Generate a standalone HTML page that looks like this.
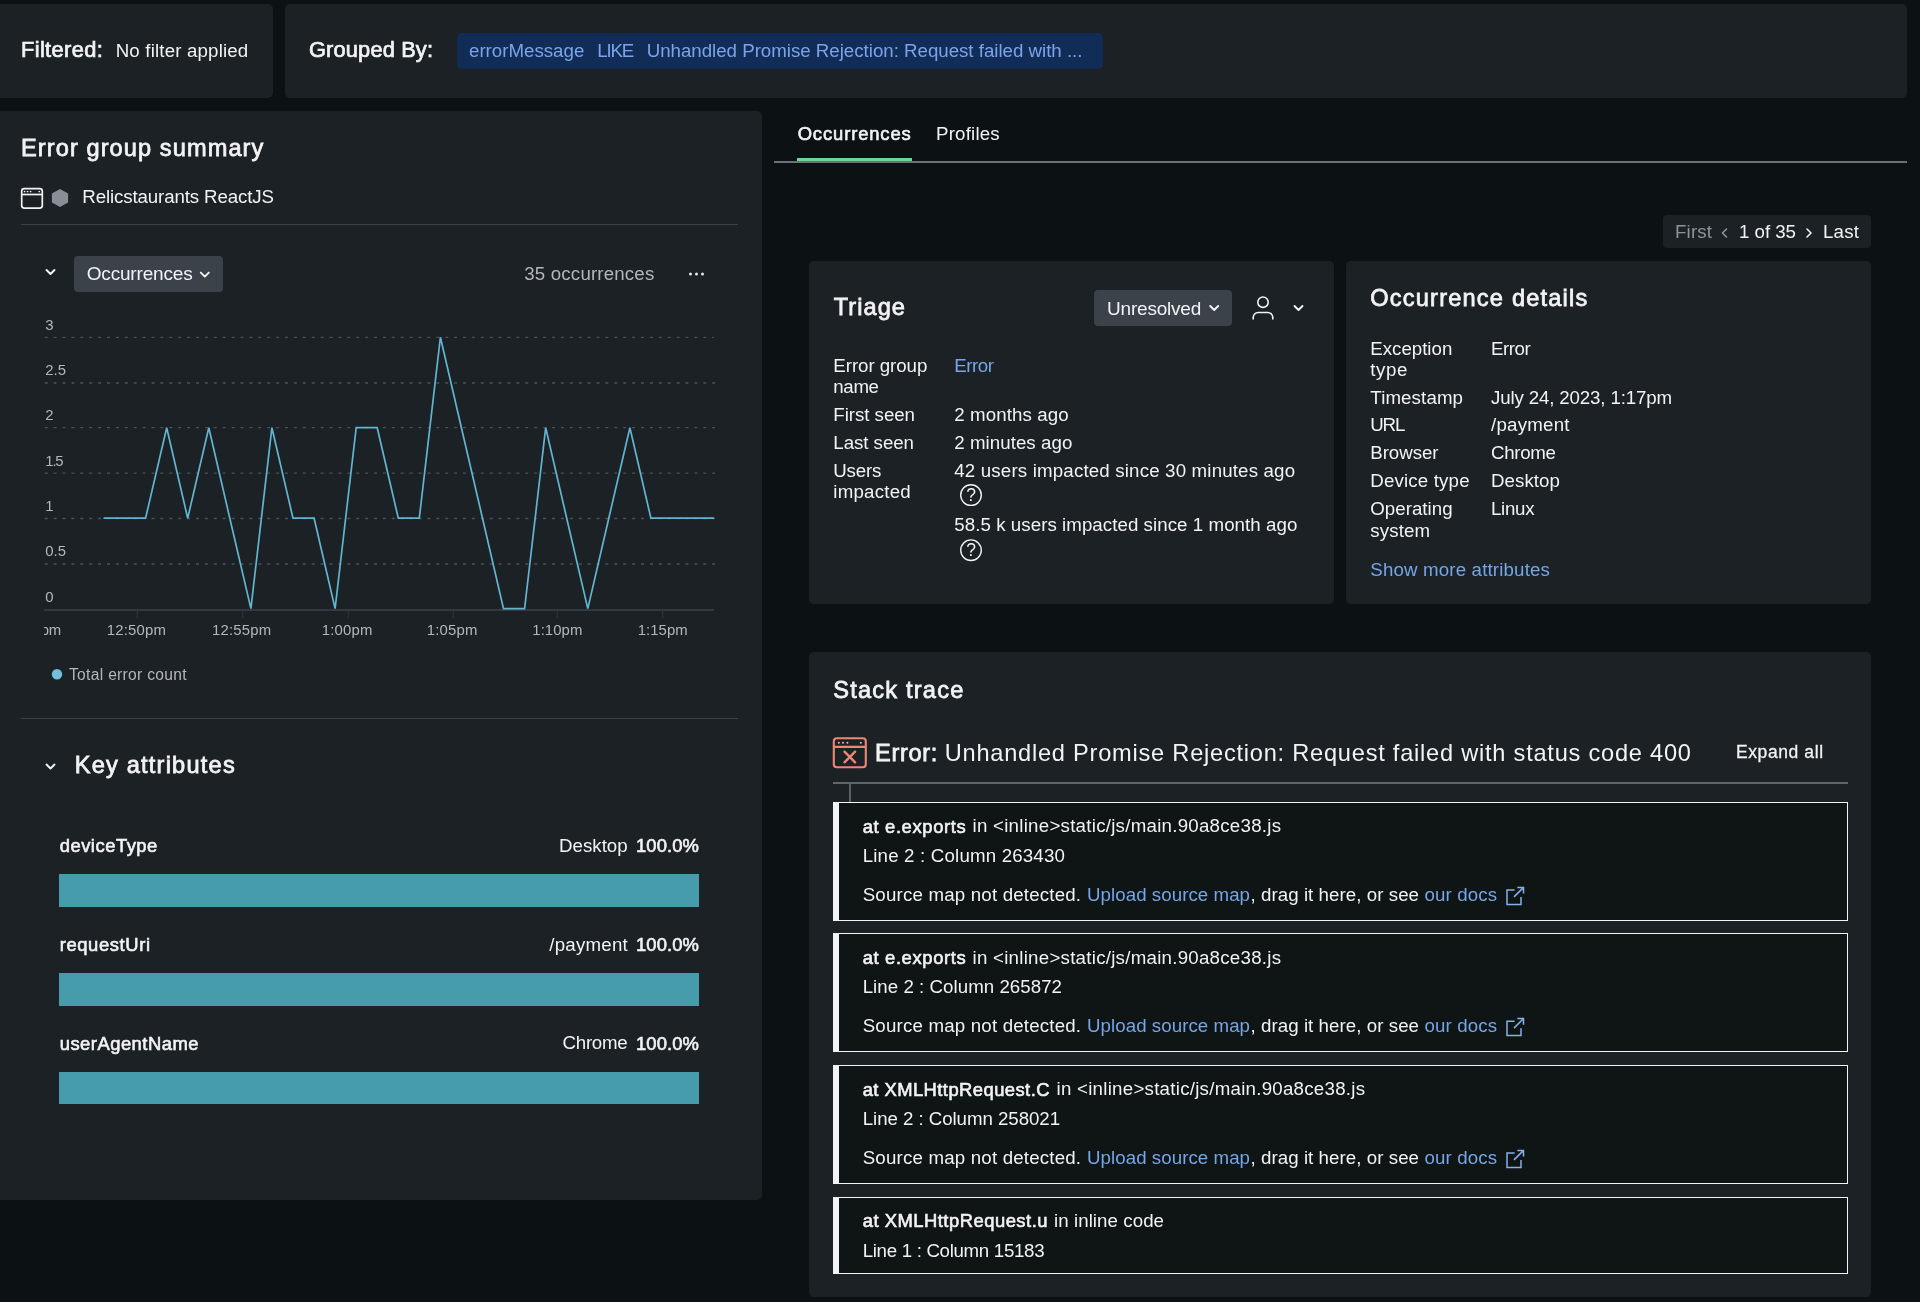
<!DOCTYPE html>
<html lang="en"><head><meta charset="utf-8"><title>Error group</title>
<style>
html,body{margin:0;padding:0}
body{width:1920px;height:1302px;background:#0c1213;overflow:hidden;position:relative;font-family:"Liberation Sans","DejaVu Sans",sans-serif;color:#f2f3f4}
.p{position:absolute;background:#1c2126}
.t{position:absolute;white-space:pre;line-height:1}
.b{position:absolute}
svg{position:absolute;overflow:visible}
.frame{position:absolute;left:833px;width:1014.5px;box-sizing:border-box;background:#0f1415;border:1.8px solid #f1f3f4;border-left:6.4px solid #f1f3f4}
.bar{position:absolute;left:59.3px;width:640px;height:32.5px;background:#479cab}
#texts{position:absolute;left:0;top:0;width:1920px;height:1302px;will-change:transform}

</style></head>
<body>
<!-- top bar -->
<div class="p" style="left:0;top:4px;width:273px;height:94.3px;border-radius:0 5px 5px 0"></div>
<div class="p" style="left:285px;top:4px;width:1621.5px;height:94.3px;border-radius:5px"></div>
<div class="b" style="left:456.7px;top:33.3px;width:646.6px;height:35.7px;border-radius:5px;background:#122c58"></div>
<!-- left panel -->
<div class="p" style="left:0;top:111px;width:761.5px;height:1088.5px;border-radius:0 5px 5px 0"></div>
<div class="b" style="left:21px;top:223.6px;width:717.3px;height:1.4px;background:#3b4046"></div>
<div class="b" style="left:21px;top:718px;width:717.3px;height:1.4px;background:#3b4046"></div>
<div class="b" style="left:74px;top:256px;width:148.7px;height:35.7px;border-radius:4px;background:#3c424a"></div>
<!-- right panels -->
<div class="b" style="left:774px;top:161.4px;width:1132.5px;height:1.3px;background:#6c7176"></div>
<div class="b" style="left:797.3px;top:157.8px;width:114.4px;height:3.6px;background:#6fd695"></div>
<div class="p" style="left:1663px;top:215px;width:208px;height:33px;border-radius:4px"></div>
<div class="p" style="left:809.3px;top:261px;width:525px;height:343px;border-radius:5px"></div>
<div class="p" style="left:1346px;top:261px;width:525px;height:343px;border-radius:5px"></div>
<div class="p" style="left:809.3px;top:652.3px;width:1061.7px;height:645.2px;border-radius:5px"></div>
<div class="b" style="left:1094.3px;top:290px;width:137.4px;height:35.7px;border-radius:4px;background:#3c424a"></div>
<div class="b" style="left:833px;top:782.2px;width:1014.5px;height:1.4px;background:#60656b"></div>
<div class="b" style="left:849.3px;top:783px;width:1.4px;height:20px;background:#5b6066"></div>
<div class="frame" style="top:802px;height:119.3px"></div>
<div class="frame" style="top:933.2px;height:119.3px"></div>
<div class="frame" style="top:1065px;height:119.3px"></div>
<div class="frame" style="top:1196.7px;height:77.6px"></div>
<div class="bar" style="top:874.3px"></div>
<div class="bar" style="top:973px"></div>
<div class="bar" style="top:1071.8px"></div>
<svg width="1920" height="1302" style="left:0;top:0" viewBox="0 0 1920 1302">
<line x1="44.7" y1="337.3" x2="714" y2="337.3" stroke="#4b5157" stroke-width="1.3" stroke-dasharray="3 5.9"/>
<line x1="44.7" y1="383" x2="715" y2="383" stroke="#4b5157" stroke-width="1.3" stroke-dasharray="3 5.9"/>
<line x1="44.7" y1="427.7" x2="715" y2="427.7" stroke="#4b5157" stroke-width="1.3" stroke-dasharray="3 5.9"/>
<line x1="44.7" y1="473.2" x2="715" y2="473.2" stroke="#4b5157" stroke-width="1.3" stroke-dasharray="3 5.9"/>
<line x1="44.7" y1="518.5" x2="715" y2="518.5" stroke="#4b5157" stroke-width="1.3" stroke-dasharray="3 5.9"/>
<line x1="44.7" y1="564" x2="715" y2="564" stroke="#4b5157" stroke-width="1.3" stroke-dasharray="3 5.9"/>
<line x1="44" y1="610" x2="714" y2="610" stroke="#4d5359" stroke-width="1.1"/>
<line x1="137.3" y1="610" x2="137.3" y2="618" stroke="#2e3439" stroke-width="1.2"/>
<line x1="242.7" y1="610" x2="242.7" y2="618" stroke="#2e3439" stroke-width="1.2"/>
<line x1="348.3" y1="610" x2="348.3" y2="618" stroke="#2e3439" stroke-width="1.2"/>
<line x1="453.3" y1="610" x2="453.3" y2="618" stroke="#2e3439" stroke-width="1.2"/>
<line x1="557.3" y1="610" x2="557.3" y2="618" stroke="#2e3439" stroke-width="1.2"/>
<line x1="662.7" y1="610" x2="662.7" y2="618" stroke="#2e3439" stroke-width="1.2"/>
<polyline points="103.5,518.2 124.6,518.2 145.6,518.2 166.7,427.7 187.7,518.2 208.8,427.7 229.8,518.2 250.9,608.6 271.9,427.7 293.0,518.2 314.1,518.2 335.1,608.6 356.2,427.7 377.2,427.7 398.3,518.2 419.3,518.2 440.4,337.3 461.4,427.7 482.5,518.2 503.5,608.6 524.6,608.6 545.7,427.7 566.7,518.2 587.8,608.6 608.8,518.2 629.9,427.7 650.9,518.2 672.0,518.2 693.0,518.2 714.1,518.2" fill="none" stroke="#62b4d0" stroke-width="1.7" stroke-linejoin="miter"/>
<circle cx="57" cy="674.3" r="5.2" fill="#74c0dc"/>
</svg>

<svg width="1920" height="1302" style="left:0;top:0" viewBox="0 0 1920 1302" fill="none" stroke-linecap="round" stroke-linejoin="round">
<!-- browser icon -->
<g stroke="#f2f3f4" stroke-width="1.7">
<rect x="21.7" y="188.6" width="20.6" height="19.6" rx="2.6"/>
<line x1="21.7" y1="194.5" x2="42.3" y2="194.5" stroke-linecap="butt"/>
</g>
<g fill="#f2f3f4"><circle cx="24.6" cy="191.5" r="0.85"/><circle cx="27.6" cy="191.5" r="0.85"/><circle cx="30.6" cy="191.5" r="0.85"/><circle cx="39.3" cy="191.5" r="0.85"/></g>
<!-- hexagon -->
<polygon points="60,189 68.1,193.5 68.1,202.6 60,207.1 51.9,202.6 51.9,193.5" fill="#898e94" stroke="none"/>
<!-- chevrons -->
<g stroke="#f2f3f4" stroke-width="1.9">
<polyline points="46.5,270 50.5,274 54.5,270"/>
<polyline points="200.8,272.6 204.8,276.6 208.8,272.6"/>
<polyline points="46.5,764.5 50.5,768.5 54.5,764.5"/>
<polyline points="1210.2,306 1214.2,310 1218.2,306"/>
<polyline points="1294.5,306 1298.5,310 1302.5,306"/>
<polyline points="1811,229 1807,233 1811,237" transform="translate(3618,0) scale(-1,1)" stroke-width="1.6"/>
</g>
<polyline points="1726.5,229 1722.5,233 1726.5,237" stroke="#8e9399" stroke-width="1.6"/>
<!-- dots -->
<g fill="#e6e8ea"><circle cx="690.5" cy="274" r="1.5"/><circle cx="696.5" cy="274" r="1.5"/><circle cx="702.5" cy="274" r="1.5"/></g>
<!-- user icon -->
<g stroke="#f2f3f4" stroke-width="1.6">
<circle cx="1263" cy="302.2" r="5.2"/>
<path d="M1253.2 319.6v-2.1a5 5 0 0 1 5-5h9.6a5 5 0 0 1 5 5v2.1" stroke-linecap="butt"/>
</g>
<!-- help icons -->
<g stroke="#f2f3f4" stroke-width="1.4">
<circle cx="971" cy="495.1" r="10.3"/>
<circle cx="971" cy="550.2" r="10.3"/>
</g>
<!-- error icon -->
<g stroke="#ee8674" stroke-width="2.1">
<rect x="833.8" y="738.3" width="32" height="29" rx="3"/>
<line x1="833.8" y1="746.9" x2="865.8" y2="746.9" stroke-linecap="butt"/>
<line x1="844.5" y1="751.7" x2="855.1" y2="762.3" stroke-width="2.4"/>
<line x1="855.1" y1="751.7" x2="844.5" y2="762.3" stroke-width="2.4"/>
</g>
<g fill="#f5b3a8"><circle cx="838.8" cy="742.7" r="1"/><circle cx="843" cy="742.7" r="1"/><circle cx="847.4" cy="742.7" r="1"/><circle cx="860.8" cy="742.7" r="1"/></g>
<!-- external link icons -->
<g stroke="#86b0ea" stroke-width="1.5" stroke-linecap="butt" stroke-linejoin="miter">
<path d="M1514.6 890.0h-7.6v14.4h14v-7.4M1517.3 887.4h6.2v6.2M1523.3 887.6l-9.3 9.3"/>
<path d="M1514.6 1021.2h-7.6v14.4h14v-7.4M1517.3 1018.6h6.2v6.2M1523.3 1018.8l-9.3 9.3"/>
<path d="M1514.6 1153.0h-7.6v14.4h14v-7.4M1517.3 1150.4h6.2v6.2M1523.3 1150.6l-9.3 9.3"/>
</g>
</svg>


<div id="texts">
<span class="t" style="left:21.0px;top:39.1px;font-size:21.8px;letter-spacing:0.37px;-webkit-text-stroke:0.72px #f2f3f4;">Filtered:</span>
<span class="t" style="left:115.7px;top:41.5px;font-size:18.7px;letter-spacing:0.17px;">No filter applied</span>
<span class="t" style="left:309.0px;top:39.1px;font-size:21.8px;letter-spacing:0.16px;-webkit-text-stroke:0.72px #f2f3f4;">Grouped By:</span>
<span class="t" style="left:469.0px;top:41.8px;font-size:18.7px;letter-spacing:0.00px;color:#7ba4e8;">errorMessage</span>
<span class="t" style="left:597.3px;top:41.8px;font-size:18.7px;letter-spacing:-1.20px;color:#7ba4e8;">LIKE</span>
<span class="t" style="left:646.7px;top:41.8px;font-size:18.7px;letter-spacing:-0.01px;color:#7ba4e8;">Unhandled Promise Rejection: Request failed with ...</span>
<span class="t" style="left:21.0px;top:137.3px;font-size:23.6px;letter-spacing:1.08px;-webkit-text-stroke:0.78px #f2f3f4;">Error group summary</span>
<span class="t" style="left:82.3px;top:187.5px;font-size:18.7px;letter-spacing:-0.12px;">Relicstaurants ReactJS</span>
<span class="t" style="left:86.7px;top:264.4px;font-size:19px;letter-spacing:-0.17px;">Occurrences</span>
<span class="t" style="left:524.3px;top:264.7px;font-size:18.7px;letter-spacing:0.17px;color:#b3b7bb;">35 occurrences</span>
<span class="t" style="left:45.3px;top:317.6px;font-size:14.9px;letter-spacing:0.00px;color:#b3b7bb;">3</span>
<span class="t" style="left:45.3px;top:363.3px;font-size:14.9px;letter-spacing:-0.00px;color:#b3b7bb;">2.5</span>
<span class="t" style="left:45.3px;top:408.0px;font-size:14.9px;letter-spacing:0.00px;color:#b3b7bb;">2</span>
<span class="t" style="left:45.3px;top:453.5px;font-size:14.9px;letter-spacing:-1.20px;color:#b3b7bb;">1.5</span>
<span class="t" style="left:45.3px;top:498.8px;font-size:14.9px;letter-spacing:0.00px;color:#b3b7bb;">1</span>
<span class="t" style="left:45.3px;top:544.3px;font-size:14.9px;letter-spacing:-0.00px;color:#b3b7bb;">0.5</span>
<span class="t" style="left:45.3px;top:590.3px;font-size:14.9px;letter-spacing:0.00px;color:#b3b7bb;">0</span>
<span class="t" style="left:106.7px;top:623.1px;font-size:14.9px;letter-spacing:0.22px;color:#b3b7bb;">12:50pm</span>
<span class="t" style="left:212.0px;top:623.1px;font-size:14.9px;letter-spacing:0.22px;color:#b3b7bb;">12:55pm</span>
<span class="t" style="left:321.7px;top:623.1px;font-size:14.9px;letter-spacing:0.19px;color:#b3b7bb;">1:00pm</span>
<span class="t" style="left:426.7px;top:623.1px;font-size:14.9px;letter-spacing:0.19px;color:#b3b7bb;">1:05pm</span>
<span class="t" style="left:532.3px;top:623.1px;font-size:14.9px;letter-spacing:0.07px;color:#b3b7bb;">1:10pm</span>
<span class="t" style="left:637.7px;top:623.1px;font-size:14.9px;letter-spacing:0.07px;color:#b3b7bb;">1:15pm</span>
<span class="t" style="left:69.0px;top:666.8px;font-size:15.6px;letter-spacing:0.31px;color:#b3b7bb;">Total error count</span>
<span class="t" style="left:74.7px;top:754.0px;font-size:23.6px;letter-spacing:1.21px;-webkit-text-stroke:0.78px #f2f3f4;">Key attributes</span>
<span class="t" style="left:59.7px;top:837.1px;font-size:18.4px;letter-spacing:0.51px;-webkit-text-stroke:0.61px #f2f3f4;">deviceType</span>
<span class="t" style="left:559.0px;top:836.9px;font-size:18.7px;letter-spacing:0.02px;">Desktop</span>
<span class="t" style="left:636.0px;top:837.1px;font-size:18.4px;letter-spacing:0.12px;-webkit-text-stroke:0.61px #f2f3f4;">100.0%</span>
<span class="t" style="left:59.7px;top:935.8px;font-size:18.4px;letter-spacing:0.61px;-webkit-text-stroke:0.61px #f2f3f4;">requestUri</span>
<span class="t" style="left:549.3px;top:935.6px;font-size:18.7px;letter-spacing:0.22px;">/payment</span>
<span class="t" style="left:636.0px;top:935.8px;font-size:18.4px;letter-spacing:0.12px;-webkit-text-stroke:0.61px #f2f3f4;">100.0%</span>
<span class="t" style="left:59.7px;top:1034.5px;font-size:18.4px;letter-spacing:0.49px;-webkit-text-stroke:0.61px #f2f3f4;">userAgentName</span>
<span class="t" style="left:562.5px;top:1034.3px;font-size:18.7px;letter-spacing:-0.25px;">Chrome</span>
<span class="t" style="left:636.0px;top:1034.5px;font-size:18.4px;letter-spacing:0.12px;-webkit-text-stroke:0.61px #f2f3f4;">100.0%</span>
<span class="t" style="left:797.7px;top:124.7px;font-size:18.4px;letter-spacing:0.88px;-webkit-text-stroke:0.61px #f2f3f4;">Occurrences</span>
<span class="t" style="left:936.0px;top:124.5px;font-size:18.7px;letter-spacing:0.20px;">Profiles</span>
<span class="t" style="left:1675.0px;top:222.7px;font-size:18.7px;letter-spacing:0.17px;color:#8e9399;">First</span>
<span class="t" style="left:1739.0px;top:222.7px;font-size:18.7px;letter-spacing:-0.03px;">1 of 35</span>
<span class="t" style="left:1823.0px;top:222.7px;font-size:18.7px;letter-spacing:0.22px;">Last</span>
<span class="t" style="left:833.7px;top:295.5px;font-size:23.6px;letter-spacing:1.06px;-webkit-text-stroke:0.78px #f2f3f4;">Triage</span>
<span class="t" style="left:1107.0px;top:298.7px;font-size:19px;letter-spacing:-0.20px;">Unresolved</span>
<span class="t" style="left:833.3px;top:356.9px;font-size:18.7px;letter-spacing:-0.05px;">Error group</span>
<span class="t" style="left:833.3px;top:378.2px;font-size:18.7px;letter-spacing:-0.35px;">name</span>
<span class="t" style="left:954.3px;top:356.9px;font-size:18.7px;letter-spacing:-0.46px;color:#74a6e8;">Error</span>
<span class="t" style="left:833.3px;top:405.9px;font-size:18.7px;letter-spacing:-0.04px;">First seen</span>
<span class="t" style="left:954.3px;top:405.9px;font-size:18.7px;letter-spacing:0.10px;">2 months ago</span>
<span class="t" style="left:833.3px;top:433.5px;font-size:18.7px;letter-spacing:-0.04px;">Last seen</span>
<span class="t" style="left:954.3px;top:433.5px;font-size:18.7px;letter-spacing:0.05px;">2 minutes ago</span>
<span class="t" style="left:833.3px;top:461.5px;font-size:18.7px;letter-spacing:-0.20px;">Users</span>
<span class="t" style="left:833.3px;top:482.9px;font-size:18.7px;letter-spacing:0.22px;">impacted</span>
<span class="t" style="left:954.3px;top:461.5px;font-size:18.7px;letter-spacing:0.17px;">42 users impacted since 30 minutes ago</span>
<span class="t" style="left:954.3px;top:516.4px;font-size:18.7px;letter-spacing:0.06px;">58.5 k users impacted since 1 month ago</span>
<span class="t" style="left:966.2px;top:486.5px;font-size:17.5px;letter-spacing:0.11px;">?</span>
<span class="t" style="left:966.2px;top:541.7px;font-size:17.5px;letter-spacing:0.11px;">?</span>
<span class="t" style="left:1370.3px;top:286.9px;font-size:23.6px;letter-spacing:1.19px;-webkit-text-stroke:0.78px #f2f3f4;">Occurrence details</span>
<span class="t" style="left:1370.3px;top:339.9px;font-size:18.7px;letter-spacing:-0.01px;">Exception</span>
<span class="t" style="left:1370.3px;top:361.4px;font-size:18.7px;letter-spacing:0.56px;">type</span>
<span class="t" style="left:1491.0px;top:339.9px;font-size:18.7px;letter-spacing:-0.46px;">Error</span>
<span class="t" style="left:1370.3px;top:388.5px;font-size:18.7px;letter-spacing:0.12px;">Timestamp</span>
<span class="t" style="left:1491.0px;top:388.5px;font-size:18.7px;letter-spacing:-0.14px;">July 24, 2023, 1:17pm</span>
<span class="t" style="left:1370.3px;top:415.9px;font-size:18.7px;letter-spacing:-1.20px;">URL</span>
<span class="t" style="left:1491.0px;top:415.9px;font-size:18.7px;letter-spacing:0.23px;">/payment</span>
<span class="t" style="left:1370.3px;top:443.8px;font-size:18.7px;letter-spacing:-0.06px;">Browser</span>
<span class="t" style="left:1491.0px;top:443.8px;font-size:18.7px;letter-spacing:-0.29px;">Chrome</span>
<span class="t" style="left:1370.3px;top:472.0px;font-size:18.7px;letter-spacing:0.16px;">Device type</span>
<span class="t" style="left:1491.0px;top:472.0px;font-size:18.7px;letter-spacing:0.07px;">Desktop</span>
<span class="t" style="left:1370.3px;top:499.8px;font-size:18.7px;letter-spacing:0.02px;">Operating</span>
<span class="t" style="left:1370.3px;top:521.6px;font-size:18.7px;letter-spacing:0.10px;">system</span>
<span class="t" style="left:1491.0px;top:499.8px;font-size:18.7px;letter-spacing:-0.30px;">Linux</span>
<span class="t" style="left:1370.3px;top:560.9px;font-size:18.7px;letter-spacing:0.16px;color:#74a6e8;">Show more attributes</span>
<span class="t" style="left:833.3px;top:679.4px;font-size:23.6px;letter-spacing:1.20px;-webkit-text-stroke:0.78px #f2f3f4;">Stack trace</span>
<span class="t" style="left:875.0px;top:741.8px;font-size:23.6px;letter-spacing:0.66px;-webkit-text-stroke:0.78px #f2f3f4;">Error:</span>
<span class="t" style="left:944.7px;top:742.0px;font-size:23.6px;letter-spacing:0.77px;">Unhandled Promise Rejection: Request failed with status code 400</span>
<span class="t" style="left:1736.0px;top:744.3px;font-size:17.5px;letter-spacing:0.59px;-webkit-text-stroke:0.28px #f2f3f4;">Expand all</span>
<span class="t" style="left:862.7px;top:817.6px;font-size:18.4px;letter-spacing:0.63px;-webkit-text-stroke:0.61px #f2f3f4;">at e.exports</span>
<span class="t" style="left:972.5px;top:817.4px;font-size:18.7px;letter-spacing:0.26px;">in &lt;inline&gt;static/js/main.90a8ce38.js</span>
<span class="t" style="left:862.7px;top:846.9px;font-size:18.7px;letter-spacing:0.18px;">Line 2 : Column 263430</span>
<span class="t" style="left:862.7px;top:886.1px;font-size:18.7px;letter-spacing:0.19px;">Source map not detected.</span>
<span class="t" style="left:1087.0px;top:886.1px;font-size:18.7px;letter-spacing:0.06px;color:#74a6e8;">Upload source map</span>
<span class="t" style="left:1250.5px;top:886.1px;font-size:18.7px;letter-spacing:0.06px;">, drag it here, or see</span>
<span class="t" style="left:1424.5px;top:886.1px;font-size:18.7px;letter-spacing:0.12px;color:#74a6e8;">our docs</span>
<span class="t" style="left:862.7px;top:948.8px;font-size:18.4px;letter-spacing:0.63px;-webkit-text-stroke:0.61px #f2f3f4;">at e.exports</span>
<span class="t" style="left:972.5px;top:948.6px;font-size:18.7px;letter-spacing:0.26px;">in &lt;inline&gt;static/js/main.90a8ce38.js</span>
<span class="t" style="left:862.7px;top:978.1px;font-size:18.7px;letter-spacing:0.04px;">Line 2 : Column 265872</span>
<span class="t" style="left:862.7px;top:1017.3px;font-size:18.7px;letter-spacing:0.19px;">Source map not detected.</span>
<span class="t" style="left:1087.0px;top:1017.3px;font-size:18.7px;letter-spacing:0.06px;color:#74a6e8;">Upload source map</span>
<span class="t" style="left:1250.5px;top:1017.3px;font-size:18.7px;letter-spacing:0.06px;">, drag it here, or see</span>
<span class="t" style="left:1424.5px;top:1017.3px;font-size:18.7px;letter-spacing:0.12px;color:#74a6e8;">our docs</span>
<span class="t" style="left:862.7px;top:1080.6px;font-size:18.4px;letter-spacing:0.44px;-webkit-text-stroke:0.61px #f2f3f4;">at XMLHttpRequest.C</span>
<span class="t" style="left:1056.5px;top:1080.4px;font-size:18.7px;letter-spacing:0.26px;">in &lt;inline&gt;static/js/main.90a8ce38.js</span>
<span class="t" style="left:862.7px;top:1109.9px;font-size:18.7px;letter-spacing:-0.05px;">Line 2 : Column 258021</span>
<span class="t" style="left:862.7px;top:1149.1px;font-size:18.7px;letter-spacing:0.19px;">Source map not detected.</span>
<span class="t" style="left:1087.0px;top:1149.1px;font-size:18.7px;letter-spacing:0.06px;color:#74a6e8;">Upload source map</span>
<span class="t" style="left:1250.5px;top:1149.1px;font-size:18.7px;letter-spacing:0.06px;">, drag it here, or see</span>
<span class="t" style="left:1424.5px;top:1149.1px;font-size:18.7px;letter-spacing:0.12px;color:#74a6e8;">our docs</span>
<span class="t" style="left:862.7px;top:1212.3px;font-size:18.4px;letter-spacing:0.50px;-webkit-text-stroke:0.61px #f2f3f4;">at XMLHttpRequest.u</span>
<span class="t" style="left:1054.0px;top:1212.1px;font-size:18.7px;letter-spacing:0.07px;">in inline code</span>
<span class="t" style="left:862.7px;top:1241.6px;font-size:18.7px;letter-spacing:-0.31px;">Line 1 : Column 15183</span>
<div style="position:absolute;left:44px;top:618px;width:30px;height:26px;overflow:hidden"><span class="t" style="left:-39.8px;top:5.1px;font-size:14.9px;letter-spacing:-0.15px;color:#b3b7bb">12:45pm</span></div><!--CLIPPM-->
</div>
</body></html>
